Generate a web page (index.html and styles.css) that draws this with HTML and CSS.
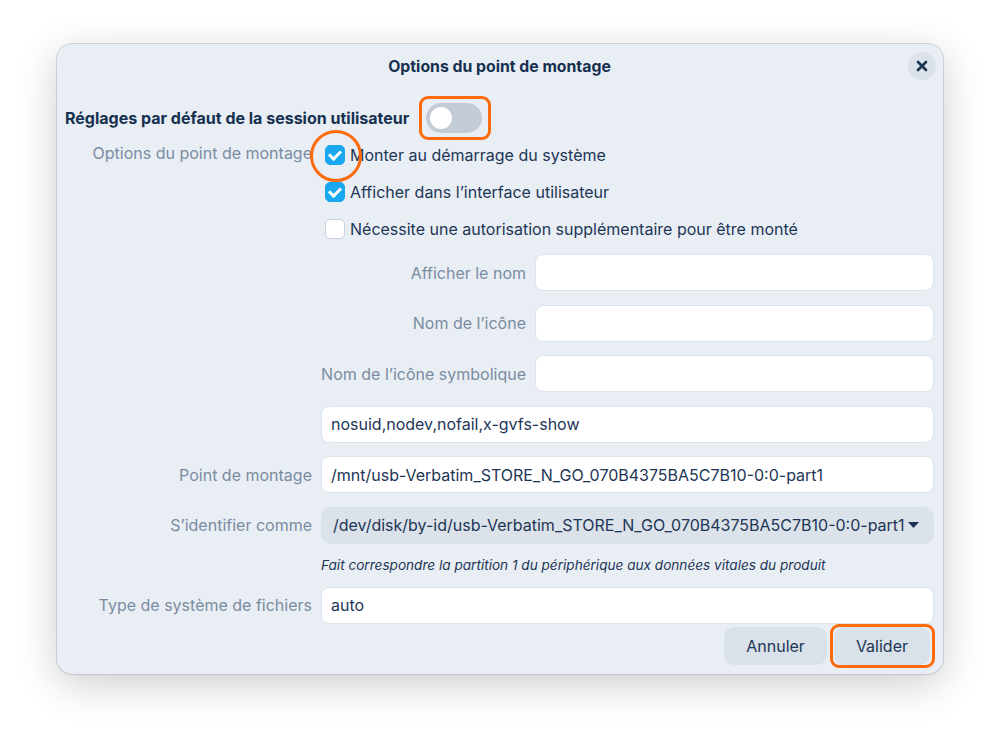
FILE: index.html
```html
<!DOCTYPE html>
<html lang="fr">
<head>
    <meta charset="UTF-8">
    <title>Options du point de montage</title>
    <link rel="stylesheet" href="styles.css">
</head>
<body>
    <div class="dialog">
        <div class="header">
            <span class="title">Options du point de montage</span>
            <button class="close" aria-label="Fermer">
                <svg width="12" height="12" viewBox="0 0 12 12"><path d="M2 2L10 10M10 2L2 10" stroke="#1b3454" stroke-width="2.6" stroke-linecap="round"/></svg>
            </button>
        </div>

        <div class="prefs">
            <span class="prefsLabel">Réglages par défaut de la session utilisateur</span>
            <span class="toggle marked"><span class="knob"></span></span>
        </div>

        <div class="checks">
            <span class="label">Options du point de montage</span>
            <label class="check"><span class="box on circled"></span>Monter au démarrage du système</label>
            <label class="check second"><span class="box on"></span>Afficher dans l’interface utilisateur</label>
            <label class="check second"><span class="box"></span>Nécessite une autorisation supplémentaire pour être monté</label>
        </div>

        <div class="fields">
            <div class="inner">
                <span class="label">Afficher le nom</span>
                <div class="input"></div>
                <span class="label">Nom de l’icône</span>
                <div class="input"></div>
                <span class="label">Nom de l’icône symbolique</span>
                <div class="input"></div>
            </div>

            <div class="input wide">nosuid,nodev,nofail,x-gvfs-show</div>

            <span class="label">Point de montage</span>
            <div class="input">/mnt/usb-Verbatim_STORE_N_GO_070B4375BA5C7B10-0:0-part1</div>

            <span class="label">S’identifier comme</span>
            <div class="combo">
                <span>/dev/disk/by-id/usb-Verbatim_STORE_N_GO_070B4375BA5C7B10-0:0-part1</span>
                <svg width="11" height="6" viewBox="0 0 11 6"><path d="M0 0H11L5.5 6Z" fill="#1b3454"/></svg>
            </div>

            <span class="hint">Fait correspondre la partition 1 du périphérique aux données vitales du produit</span>

            <span class="label">Type de système de fichiers</span>
            <div class="input">auto</div>
        </div>

        <div class="buttons">
            <button class="btn">Annuler</button>
            <button class="btn marked">Valider</button>
        </div>
    </div>
</body>
</html>
```

FILE: styles.css
```css
html {
    background: white;
}

body {
    margin: 0;
    min-height: 743px;
    box-sizing: border-box;
    padding: 44px 0 0 57px;
    font-family: Inter, "Noto Sans", sans-serif;
    font-size: 16px;
    color: #1d3656;
}

.dialog {
    width: 886px;
    height: 630px;
    box-sizing: border-box;
    padding: 0 9px 9px 8px;
    background: #e9eef5;
    border-radius: 15px;
    box-shadow: 0 0 0 1px rgba(120, 130, 145, 0.28), 0 10px 40px rgba(0, 0, 0, 0.2);
}

.header {
    height: 44px;
    display: flex;
    align-items: center;
    justify-content: center;
    position: relative;
}

.title {
    font-weight: 700;
    font-size: 15.8px;
    color: #16304f;
}

.close {
    position: absolute;
    right: -2px;
    top: 8px;
    width: 28px;
    height: 28px;
    border: none;
    border-radius: 50%;
    background: #dbe2ea;
    display: flex;
    align-items: center;
    justify-content: center;
    padding: 0;
}

.prefs {
    margin-top: 13px;
    height: 34px;
    display: flex;
    align-items: center;
    gap: 17px;
}

.prefsLabel {
    font-weight: 700;
    color: #16304f;
}

.toggle {
    width: 56px;
    height: 30px;
    border-radius: 15px;
    background: #c3ccd6;
    display: flex;
    align-items: center;
    padding-left: 4px;
    box-sizing: border-box;
    position: relative;
}

.knob {
    width: 22px;
    height: 22px;
    border-radius: 50%;
    background: white;
}

.toggle.marked::after {
    content: "";
    position: absolute;
    inset: -7px -9px -7px -7px;
    border: 3px solid #fb6a0c;
    border-radius: 9px;
}

.checks {
    margin-top: 1px;
    display: grid;
    grid-template-columns: 247px 1fr;
    grid-auto-rows: 37px;
    column-gap: 9px;
    align-items: center;
}

.label {
    color: #7a8ca1;
    text-align: right;
    white-space: nowrap;
}

.checks .label {
    margin-top: -3px;
}

.check {
    display: flex;
    align-items: center;
    gap: 5px;
    padding-left: 4px;
    white-space: nowrap;
}

.check.second {
    grid-column: 2;
}

.box {
    width: 20px;
    height: 20px;
    box-sizing: border-box;
    border-radius: 5px;
    background: white;
    border: 1px solid #c9d1db;
    position: relative;
}

.box.on {
    background: #19a7ef;
    border-color: #19a7ef;
}

.box.on::before {
    content: "";
    position: absolute;
    left: 5px;
    top: 2px;
    width: 5px;
    height: 9px;
    border: solid white;
    border-width: 0 3px 3px 0;
    transform: rotate(45deg);
}

.box.circled::after {
    content: "";
    position: absolute;
    left: -16px;
    top: -16px;
    width: 46px;
    height: 46px;
    border: 3px solid #fb6a0c;
    border-radius: 50%;
}

.fields {
    margin-top: 7px;
    display: grid;
    grid-template-columns: 247px 1fr;
    column-gap: 9px;
    row-gap: 13.5px;
    align-items: center;
}

.inner {
    grid-column: 2;
    display: grid;
    grid-template-columns: 205px 1fr;
    column-gap: 9px;
    row-gap: 13.5px;
    align-items: center;
}

.input {
    height: 37px;
    box-sizing: border-box;
    background: white;
    border: 1px solid #dbe3ec;
    border-radius: 8px;
    padding: 0 9px;
    display: flex;
    align-items: center;
    white-space: nowrap;
}

.input.wide,
.hint {
    grid-column: 2;
}

.combo {
    height: 37px;
    box-sizing: border-box;
    background: #dbe2ea;
    border-radius: 10px;
    padding: 0 15px 0 12px;
    display: flex;
    align-items: center;
    justify-content: space-between;
    white-space: nowrap;
}

.hint {
    font-size: 13.6px;
    font-style: italic;
    line-height: 16px;
    white-space: nowrap;
}

.buttons {
    margin-top: 3px;
    display: flex;
    justify-content: flex-end;
    gap: 7px;
    padding-right: 4px;
}

.btn {
    height: 38px;
    border: none;
    border-radius: 10px;
    background: #d9e1e9;
    color: #1d3656;
    font-family: inherit;
    font-size: 16px;
    padding: 0 22px;
    position: relative;
}

.btn.marked::after {
    content: "";
    position: absolute;
    inset: -3px -5px -3px -4px;
    border: 3px solid #fb6a0c;
    border-radius: 9px;
}
```
